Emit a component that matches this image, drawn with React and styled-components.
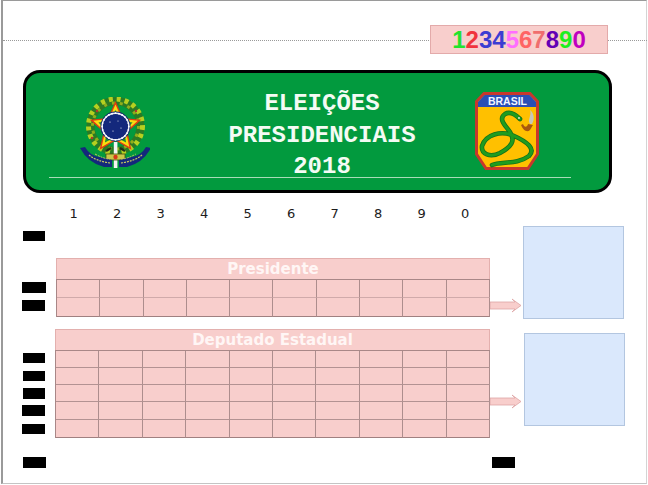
import styled, { createGlobalStyle } from "styled-components";

const GlobalStyle = createGlobalStyle`
  html, body {
    margin: 0;
    padding: 0;
    background: #fff;
  }
  body {
    width: 648px;
    height: 485px;
    overflow: hidden;
  }
`;

const Sheet = styled.div`
  position: relative;
  box-sizing: border-box;
  width: 646px;
  height: 484px;
  margin-left: 1px;
  border-top: 1px solid #9a9a9a;
  border-left: 2px solid #9a9a9a;
  border-right: 1px solid #d4d4d4;
  border-bottom: 1px solid #c4c4c4;
`;

const TopStrip = styled.div`
  position: relative;
  padding: 24px 0 0 427px;

  &::before {
    content: "";
    position: absolute;
    left: 0;
    right: -3px;
    top: 39px;
    border-top: 1px dotted #9a9a9a;
  }
`;

const NumberBox = styled.div`
  position: relative;
  box-sizing: border-box;
  width: 178px;
  height: 29px;
  background: #f8cecc;
  border: 1px solid #e3aaaa;
  font: bold 24px/27px "Liberation Sans", Arial, sans-serif;
  text-align: center;
`;

const Banner = styled.header`
  box-sizing: border-box;
  width: 589px;
  height: 123px;
  margin: 16px 0 0 20px;
  background: #029a3e;
  border: 3px solid #000;
  border-radius: 17px;
`;

const BannerRow = styled.div`
  display: grid;
  grid-template-columns: 174px 244px 1fr;
  height: 104px;
`;

const Emblem = styled.svg`
  display: block;
  margin: 24px 0 0 54px;
`;

const Shield = styled.svg`
  display: block;
  margin: 19px 0 0 31px;
`;

const Title = styled.h1`
  margin: 15px 0 0;
  color: #f4fbf4;
  font: bold 24px/31.5px "Liberation Mono", "Courier New", monospace;
  text-align: center;
`;

const BannerRule = styled.div`
  width: 522px;
  height: 1px;
  margin-left: 23px;
  background: #a9dcb8;
`;

const DigitRow = styled.div`
  display: grid;
  grid-template-columns: repeat(10, 43.5px);
  margin: 14px 0 0 49px;
  color: #1c1c1c;
  font: 13px/14px "DejaVu Sans", Verdana, sans-serif;
  text-align: center;
`;

const Section = styled.section`
  display: flex;
  align-items: flex-start;
  margin: ${({ $gap }) => $gap}px 0 0 19px;
`;

const MarkColumn = styled.div`
  flex: none;
  display: flex;
  flex-direction: column;
  width: ${({ $width }) => $width}px;
`;

const Mark = styled.span`
  display: block;
  flex: none;
  width: ${({ $width }) => $width}px;
  height: ${({ $height }) => $height}px;
  margin-top: ${({ $top }) => $top}px;
  margin-left: ${({ $left }) => $left || 0}px;
  background: #000;
`;

const Ballot = styled.div`
  flex: none;
  width: ${({ $width }) => $width}px;
  margin-top: ${({ $top }) => $top}px;
`;

const BallotTitle = styled.div`
  box-sizing: border-box;
  height: 21px;
  background: #f8cecc;
  border: 1px solid #e3b0ae;
  border-bottom: 0;
  color: #fff6f5;
  font: bold 15px/21px "DejaVu Sans", Verdana, sans-serif;
  text-align: center;
`;

const BallotGrid = styled.div`
  display: grid;
  grid-template-columns: repeat(10, 1fr);
  background: #f8cecc;
  border-top: 1px solid #a98787;
  border-left: 1px solid #a98787;
`;

const Cell = styled.div`
  box-sizing: border-box;
  height: ${({ $height }) => $height}px;
  border-right: 1px solid #ad8d8d;
  border-bottom: 1px solid ${({ $rule }) => $rule};
`;

const Arrow = styled.svg`
  display: block;
  flex: none;
  margin-top: ${({ $top }) => $top}px;
`;

const AnswerBox = styled.div`
  flex: none;
  box-sizing: border-box;
  width: 101px;
  height: 93px;
  margin-top: ${({ $top }) => $top}px;
  margin-left: ${({ $left }) => $left}px;
  background: #dae8fc;
  border: 1px solid #b3c6e0;
`;

const Footer = styled.div`
  display: flex;
  margin: 19px 0 0 20px;
`;

const numbers = [
  ["1", "#22e22e"],
  ["2", "#f0323c"],
  ["3", "#3c3cd2"],
  ["4", "#3c3cd2"],
  ["5", "#ff6eff"],
  ["6", "#ff6464"],
  ["7", "#f06e6e"],
  ["8", "#6400b4"],
  ["9", "#1eee1e"],
  ["0", "#c000c0"],
];

const starPoints = (cx, cy, outer, inner) =>
  Array.from({ length: 10 }, (_, i) => {
    const r = i % 2 === 0 ? outer : inner;
    const a = (Math.PI / 5) * i - Math.PI / 2;
    return `${(cx + r * Math.cos(a)).toFixed(1)},${(cy + r * Math.sin(a)).toFixed(1)}`;
  }).join(" ");

const ringDots = (cx, cy, r, count) =>
  Array.from({ length: count }, (_, i) => {
    const a = ((Math.PI * 2) / count) * i;
    return (
      <circle
        key={i}
        cx={cx + r * Math.cos(a)}
        cy={cy + r * Math.sin(a)}
        r="0.9"
        fill="#fff"
      />
    );
  });

const CoatOfArms = () => (
  <Emblem width="70" height="72" viewBox="0 0 70 72">
    {/* wreath */}
    <circle cx="35.5" cy="29" r="25" fill="none" stroke="#2c7a24" strokeWidth="8" />
    <circle cx="35.5" cy="29" r="27" fill="none" stroke="#b5d020" strokeWidth="5" strokeDasharray="4 4" />
    <circle cx="35.5" cy="29" r="23" fill="none" stroke="#8fae1c" strokeWidth="3" strokeDasharray="3 5" />
    <circle cx="12" cy="41" r="1.2" fill="#b3362c" />
    <circle cx="17" cy="14" r="1.2" fill="#b3362c" />
    <circle cx="56" cy="14" r="1.2" fill="#b3362c" />
    {/* star */}
    <polygon points={starPoints(35.5, 31, 27, 12.5)} fill="#e23a12" />
    <polygon points={starPoints(35.5, 31, 23.5, 11)} fill="#f8dc10" />
    <polygon points={starPoints(35.5, 31, 18, 9)} fill="#1f9030" />
    <circle cx="35.5" cy="29.5" r="15" fill="#10206e" />
    <circle cx="35.5" cy="29.5" r="14" fill="#e8e8f0" />
    <circle cx="35.5" cy="29.5" r="12.6" fill="#14287c" />
    {ringDots(35.5, 29.5, 13.3, 24)}
    <circle cx="30" cy="25" r="0.6" fill="#fff" />
    <circle cx="38" cy="24" r="0.5" fill="#fff" />
    <circle cx="41" cy="31" r="0.6" fill="#fff" />
    <circle cx="33" cy="34" r="0.6" fill="#fff" />
    {/* sword */}
    <rect x="33.8" y="45" width="3.6" height="26" fill="#f4f4f4" />
    <rect x="26" y="57" width="19" height="6" fill="#c9c848" stroke="#4b4b10" strokeWidth="0.8" />
    <circle cx="35.5" cy="60" r="2.2" fill="#d8381a" />
    <path d="M26 54 l5 -3 M45 54 l-5 -3" stroke="#22301a" strokeWidth="2.4" />
    {/* ribbon */}
    <path d="M0 51 L5 50 Q10 59 20 60 L32 63 V70 L24 70 Q8 66 0 51 Z" fill="#14287c" />
    <path d="M71 51 L66 50 Q61 59 51 60 L39 63 V70 L47 70 Q63 66 71 51 Z" fill="#14287c" />
    <path d="M9 58 Q16 64 30 66" fill="none" stroke="#c8c860" strokeWidth="1.2" strokeDasharray="2 1" />
    <path d="M62 58 Q55 64 41 66" fill="none" stroke="#c8c860" strokeWidth="1.2" strokeDasharray="2 1" />
    <path d="M15 57 Q24 62 30 62 M41 62 Q47 62 56 57" fill="none" stroke="#c8c860" strokeWidth="1" strokeDasharray="2 1" />
  </Emblem>
);

const snake =
  "M17 73 C26 69 42 73 54 64 C61 57 53 50 37 43 C26 39 11 42 7 54 C6 62 15 66 25 61 C36 55 41 49 35 40 C30 33 23 27 30 22 C35 19 41 23 45 27";

const SnakeShield = () => (
  <Shield width="64" height="79" viewBox="0 0 64 79">
    <polygon
      points="9,1.5 55,1.5 62.5,9.5 62.5,62 53,76.5 11,76.5 1.5,62 1.5,9.5"
      fill="#ffc000"
      stroke="#c8382c"
      strokeWidth="3"
    />
    <polygon points="9.5,3 54.5,3 61,10 61,15 3,15 3,10" fill="#2a4fb5" />
    <text
      x="32.5"
      y="13"
      fill="#f2f6ff"
      fontFamily="'Liberation Sans', Arial, sans-serif"
      fontSize="10.5"
      fontWeight="bold"
      textAnchor="middle"
    >
      BRASIL
    </text>
    <path d={snake} fill="none" stroke="#14701a" strokeWidth="4.6" strokeLinecap="round" />
    <path d={snake} fill="none" stroke="#1f9c1f" strokeWidth="3" strokeLinecap="round" />
    <circle cx="44" cy="26" r="0.9" fill="#e8f0e0" />
    <path d="M46 33 C48 38 52 41 55 38 L58 33 L53 32 C52 36 49 35 48 32 Z" fill="#a8580f" />
    <path d="M55 32 C52 27 57 24 55 18 C59 21 60 27 57 32 Z" fill="#c7c7b8" />
  </Shield>
);

const RightArrow = ({ top }) => (
  <Arrow $top={top} width="32" height="15" viewBox="0 0 32 15">
    <path
      d="M0 4 H25 L22 1 L31 7.5 L22 14 L25 11 H0 Z"
      fill="#f8cecc"
      stroke="#dda5a5"
      strokeWidth="0.8"
    />
  </Arrow>
);

const BallotTable = ({ title, width, top, rows, rule }) => (
  <Ballot $width={width} $top={top}>
    <BallotTitle>{title}</BallotTitle>
    <BallotGrid>
      {rows.flatMap((height, r) =>
        Array.from({ length: 10 }, (_, c) => (
          <Cell
            key={`${r}-${c}`}
            $height={height}
            $rule={r === rows.length - 1 ? "#a08080" : rule}
          />
        ))
      )}
    </BallotGrid>
  </Ballot>
);

export default function App() {
  return (
    <>
      <GlobalStyle />
      <Sheet>
        <TopStrip>
          <NumberBox>
            {numbers.map(([digit, color]) => (
              <span key={digit} style={{ color }}>
                {digit}
              </span>
            ))}
          </NumberBox>
        </TopStrip>

        <Banner>
          <BannerRow>
            <CoatOfArms />
            <Title>
              ELEIÇÕES
              <br />
              PRESIDENCIAIS
              <br />
              2018
            </Title>
            <SnakeShield />
          </BannerRow>
          <BannerRule />
        </Banner>

        <DigitRow>
          {["1", "2", "3", "4", "5", "6", "7", "8", "9", "0"].map((digit) => (
            <span key={digit}>{digit}</span>
          ))}
        </DigitRow>

        <Section $gap={5}>
          <MarkColumn $width={34}>
            <Mark $top={5} $width={22} $height={10} $left={1} />
            <Mark $top={41} $width={24} $height={11} />
            <Mark $top={7} $width={23} $height={11} />
          </MarkColumn>
          <BallotTable title="Presidente" width={434} top={32} rows={[18, 19]} rule="#d0aaaa" />
          <RightArrow top={72} />
          <AnswerBox $top={0} $left={1} />
        </Section>

        <Section $gap={10}>
          <MarkColumn $width={33}>
            <Mark $top={24} $width={22} $height={10} $left={1} />
            <Mark $top={8} $width={22} $height={10} $left={1} />
            <Mark $top={7} $width={22} $height={11} $left={1} />
            <Mark $top={6} $width={23} $height={11} />
            <Mark $top={8} $width={23} $height={10} />
          </MarkColumn>
          <BallotTable title="Deputado Estadual" width={435} top={0} rows={[17, 17, 17, 18, 18]} rule="#b39292" />
          <RightArrow top={65} />
          <AnswerBox $top={4} $left={2} />
        </Section>

        <Footer>
          <Mark $top={0} $width={23} $height={11} />
          <Mark $top={0} $width={23} $height={11} $left={446} />
        </Footer>
      </Sheet>
    </>
  );
}
